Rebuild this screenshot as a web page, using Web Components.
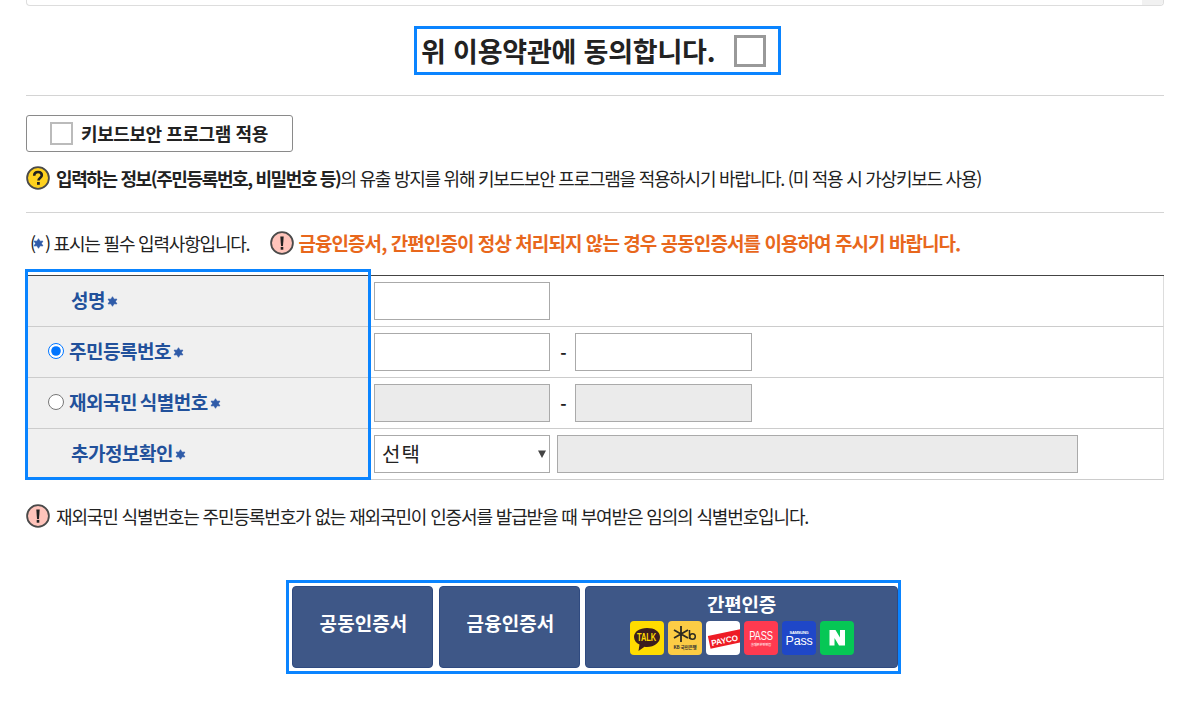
<!DOCTYPE html>
<html lang="ko"><head><meta charset="utf-8"><title>본인인증</title>
<style>
html,body{margin:0;padding:0;background:#fff;font-family:"Noto Sans CJK KR","Noto Sans",sans-serif;color:#222;}
body{width:1202px;height:703px;overflow:hidden;}
</style></head><body>
<x-page></x-page>
<script>
function def(name,css,html){
  customElements.define(name,class extends HTMLElement{
    connectedCallback(){
      if(this.shadowRoot)return;
      const r=this.attachShadow({mode:'open'});
      r.innerHTML='<style>'+css+'</style>'+(typeof html==='function'?html(this):html);
    }
  });
}
def('x-star',':host{display:inline-block;width:11px;height:11px;line-height:0;flex:none}svg{display:block}',
 `<svg width="11" height="11" viewBox="0 0 12 12"><path d="M6 .8L7.600 3.500 10.800 3.400 9.200 6 10.800 8.600 7.600 8.500 6 11.200 4.400 8.500 1.200 8.600 2.800 6 1.200 3.400 4.400 3.500Z" fill="#2f5ba8" stroke="#2f5ba8" stroke-width=".8" stroke-linejoin="round"/></svg>`);
def('x-mark',':host{display:inline-block;width:24px;height:24px;line-height:0;flex:none}svg{display:block}',
 el=>{const k=el.getAttribute('kind');
  const fill=k==='q'?'#ffd21f':'#ffc4bb';
  const g=k==='q'
   ?'<path d="M8.200 9.800c0-2.500 1.700-3.800 3.900-3.800s3.700 1.300 3.700 3.200c0 2.800-3.300 2.800-3.300 5.200" fill="none" stroke="#222" stroke-width="2.600"/><rect x="11" y="16" width="2.800" height="2.800" fill="#222"/>'
   :'<path d="M10.300 5.500h3.400l-.7 9.500h-2Z" fill="#222"/><rect x="10.700" y="15.900" width="2.600" height="2.800" fill="#222"/>';
  return `<svg width="24" height="24" viewBox="0 0 24 24"><circle cx="12" cy="12" r="10.900" fill="${fill}" stroke="#4a4a4a" stroke-width="1.800"/>${g}</svg>`;});
def('x-topbox',':host{display:block;height:5px;border:1px solid #ddd;border-top:0;border-radius:0 0 4px 4px;position:relative;overflow:hidden}.s{position:absolute;right:0;top:0;width:21px;height:5px;background:#f1f1f1}','<div class="s"></div>');
def('x-agree',`:host{display:flex;justify-content:center;padding-top:20px}
 .b{display:flex;align-items:center;box-sizing:border-box;width:367px;height:49px;border:3px solid #0a84ff;padding:0 0 0 4px;margin-left:5px}
 span{font-size:27px;font-weight:700;letter-spacing:-.2px;color:#222;line-height:1;white-space:pre}
 i{display:block;box-sizing:border-box;width:32px;height:32px;border:3px solid #999;background:#fff;margin-left:19px}`,
 '<div class="b"><span>위 이용약관에 동의합니다.</span><i></i></div>');
def('x-rule',':host{display:block;height:1px;background:#d4d4d4}','');
def('x-kbd',`:host{display:block;padding-top:19px}
 .b{display:flex;align-items:center;box-sizing:border-box;width:267px;height:37px;border:1px solid #8a8a8a;border-radius:3px;padding-left:23px}
 i{display:block;box-sizing:border-box;width:23px;height:23px;border:2px solid #bbb;margin-right:8px}
 span{font-size:18px;font-weight:700;letter-spacing:-.42px;color:#222;line-height:1;position:relative;top:-1px}`,
 '<div class="b"><i></i><span>키보드보안 프로그램 적용</span></div>');
def('x-help',`:host{display:flex;align-items:center;height:24px;padding-top:14px;font-size:18px;letter-spacing:-1.25px;color:#222;white-space:nowrap;line-height:1}
 x-mark{margin-right:6px} b{font-weight:700;letter-spacing:-1.38px}`,
 '<x-mark kind="q"></x-mark><span><b>입력하는 정보(주민등록번호, 비밀번호 등)</b>의 유출 방지를 위해 키보드보안 프로그램을 적용하시기 바랍니다. (미 적용 시 가상키보드 사용)</span>');
def('x-req',`:host{display:flex;align-items:center;height:24px;padding:18px 0 0 4px;font-size:18px;letter-spacing:-1.2px;color:#222;white-space:nowrap;line-height:1}
 x-star{margin:0 1px 0 -2px}
 x-mark{margin:0 4px 0 21px}
 b{font-size:19px;font-weight:700;color:#e8671c;letter-spacing:-.94px;position:relative;top:-1px}`,
 '<span>(</span><x-star></x-star><span>) 표시는 필수 입력사항입니다.</span><x-mark kind="e"></x-mark><b>금융인증서, 간편인증이 정상 처리되지 않는 경우 공동인증서를 이용하여 주시기 바랍니다.</b>');
def('x-formtable',`:host{display:block;position:relative;margin-top:20px;border-top:1px solid #444}
 .hl{position:absolute;left:-1px;top:-7px;bottom:0;width:346px;box-sizing:border-box;border:3px solid #0a84ff;pointer-events:none}`,
 '<slot></slot><div class="hl"></div>');
def('x-row',`:host{display:grid;grid-template-columns:342px 1fr;height:51px;box-sizing:border-box;border-bottom:1px solid #ccc;border-right:1px solid #ddd}
 .h{display:flex;align-items:center;background:#f0f0f0;padding-left:45px;font-size:19px;font-weight:700;color:#22519b;letter-spacing:-.5px;word-spacing:-2px;white-space:nowrap;line-height:1}
 input{appearance:auto;width:16px;height:16px;margin:0 5px 0 -23px;flex:none;position:relative;top:-1px}
 span{position:relative;top:-2px}
 x-star{margin-left:2px;position:relative;top:0}
 .c{display:flex;align-items:center;padding-left:6px;font-size:17px;color:#222}`,
 el=>{const r=el.getAttribute('radio');
  return `<div class="h">${r!==null?`<input type="radio" name="id" ${r==='on'?'checked':''}>`:''}<span>${el.getAttribute('label')}</span><x-star></x-star></div><div class="c"><slot></slot></div>`;});
def('x-field',`:host{display:block;box-sizing:border-box;width:176px;height:38px;border:1px solid #aaa;background:#fff}
 :host([off]){background:#ebebeb}
 :host([second]){width:177px}
 :host([wide]){width:521px;margin-left:7px}`,'');
def('x-dash',':host{display:block;width:25px;box-sizing:border-box;padding-left:2px;text-align:center;font-size:17px;font-weight:700;color:#222}','-');
def('x-select',`:host{display:flex;align-items:center;box-sizing:border-box;width:176px;height:38px;border:1px solid #aaa;background:#fff;padding:0 3px 0 7px;font-size:20px;letter-spacing:1.1px;color:#222;line-height:1}
 span{flex:1}
 svg{display:block}`,
 '<span>선택</span><svg width="8" height="8" viewBox="0 0 8 8"><path d="M0 .5H8L4 8Z" fill="#444"/></svg>');
def('x-foot',`:host{display:flex;align-items:center;height:24px;padding-top:24px;font-size:18px;letter-spacing:-1.14px;color:#222;white-space:nowrap;line-height:1}
 x-mark{margin-right:6px}`,'<x-mark kind="e"></x-mark><span>재외국민 식별번호는 주민등록번호가 없는 재외국민이 인증서를 발급받을 때 부여받은 임의의 식별번호입니다.</span>');
def('x-logo',`:host{display:block;width:34px;height:34px;border-radius:4px;overflow:hidden;line-height:0}svg{display:block;font-family:"Liberation Sans",sans-serif;font-weight:700}`,
 el=>{const k=el.getAttribute('k');const m={
 talk:'<rect width="34" height="34" fill="#ffdc00"/><path d="M17 7C9.500 7 4 10.800 4 16c0 3.300 2.200 6 5.500 7.600L8.500 30l6-4.300c.8.100 1.600.2 2.500.2 7.500 0 13-4.300 13-9.900S24.500 7 17 7Z" fill="#3b1e1e"/><text transform="translate(16.500 20) scale(.75 1)" font-size="10" text-anchor="middle" fill="#ffdc00">TALK</text>',
 kb:'<rect width="34" height="34" fill="#fccc45"/><path d="M13 5v16M6 9l14 8M6 17l14-8" stroke="#2d2a20" stroke-width="1.800" fill="none"/><path d="M21.500 9v9" stroke="#2d2a20" stroke-width="1.500"/><circle cx="24.500" cy="15.500" r="2.800" fill="none" stroke="#2d2a20" stroke-width="1.500"/><text x="17" y="28" font-size="4.600" text-anchor="middle" fill="#333" font-family="Noto Sans CJK KR">KB 국민은행</text>',
 payco:'<rect width="34" height="34" fill="#fff"/><g transform="rotate(-12 17 19)"><rect x="3" y="12" width="40" height="13" fill="#ee1c25"/><text x="5" y="22.500" font-size="8.200" fill="#fff">PAYCO</text></g>',
 pass:'<rect width="34" height="34" fill="#ff3a50"/><text transform="translate(17 18.500) scale(.72 1.050)" font-size="13" font-weight="400" text-anchor="middle" fill="#fff">PASS</text><text x="17" y="25" font-size="3.400" text-anchor="middle" fill="#ffe0e3" font-family="Noto Sans CJK KR">휴대폰본인인증</text>',
 sam:'<rect width="34" height="34" fill="#1f47c8"/><text x="17" y="13" font-size="4" text-anchor="middle" fill="#fff">SAMSUNG</text><text x="17" y="24" font-size="12.500" font-weight="400" text-anchor="middle" fill="#fff">Pass</text>',
 n:'<rect width="34" height="34" fill="#06c755"/><path d="M9.500 9h6l4.500 7.500V9h5v15.500h-6l-4.500-7.500v7.500h-5Z" fill="#fff"/>'};
 return `<svg width="34" height="34" viewBox="0 0 34 34">${m[k]}</svg>`;});
def('x-authbtn',`:host{display:flex;flex-direction:column;align-items:center;justify-content:center;box-sizing:border-box;width:141px;height:82px;background:#3e5787;border:1px solid #2f4a80;border-radius:4px;color:#fff;font-size:19px;font-weight:700;letter-spacing:.1px;line-height:1}
 :host([wide]){width:313px;justify-content:flex-start;padding-top:7px;letter-spacing:-.2px}
 .t{display:block;position:relative;top:-5px;left:1px}
 :host([wide]) .t{top:0;left:0}
 .l{display:flex;gap:4px;margin:8px 0 0 1px}`,
 el=>`<span class="t">${el.getAttribute('label')}</span>`+(el.children.length?'<div class="l"><slot></slot></div>':''));
def('x-auth',`:host{display:flex;justify-content:center;padding-top:52px}
 .b{display:flex;box-sizing:border-box;height:94px;width:615px;border:3px solid #0a84ff;padding:3px 0 3px 3px;margin-left:-3px}
 ::slotted(:nth-child(1)){margin-right:6px}
 ::slotted(:nth-child(2)){margin-right:5px}`,
 '<div class="b"><slot></slot></div>');
def('x-page',`:host{display:block;padding:0 38px 0 26px;width:1138px}`,
 `<x-topbox></x-topbox><x-agree></x-agree><x-rule style="margin-top:20px"></x-rule><x-kbd></x-kbd><x-help></x-help>
 <x-rule style="margin-top:22px"></x-rule><x-req></x-req>
 <x-formtable>
  <x-row label="성명"><x-field></x-field></x-row>
  <x-row label="주민등록번호" radio="on"><x-field></x-field><x-dash></x-dash><x-field second></x-field></x-row>
  <x-row label="재외국민 식별번호" radio="off"><x-field off></x-field><x-dash></x-dash><x-field off second></x-field></x-row>
  <x-row label="추가정보확인"><x-select></x-select><x-field off wide></x-field></x-row>
 </x-formtable>
 <x-foot></x-foot>
 <x-auth>
  <x-authbtn label="공동인증서"></x-authbtn><x-authbtn label="금융인증서"></x-authbtn>
  <x-authbtn label="간편인증" wide><x-logo k="talk"></x-logo><x-logo k="kb"></x-logo><x-logo k="payco"></x-logo><x-logo k="pass"></x-logo><x-logo k="sam"></x-logo><x-logo k="n"></x-logo></x-authbtn>
 </x-auth>`);
</script>
</body></html>
